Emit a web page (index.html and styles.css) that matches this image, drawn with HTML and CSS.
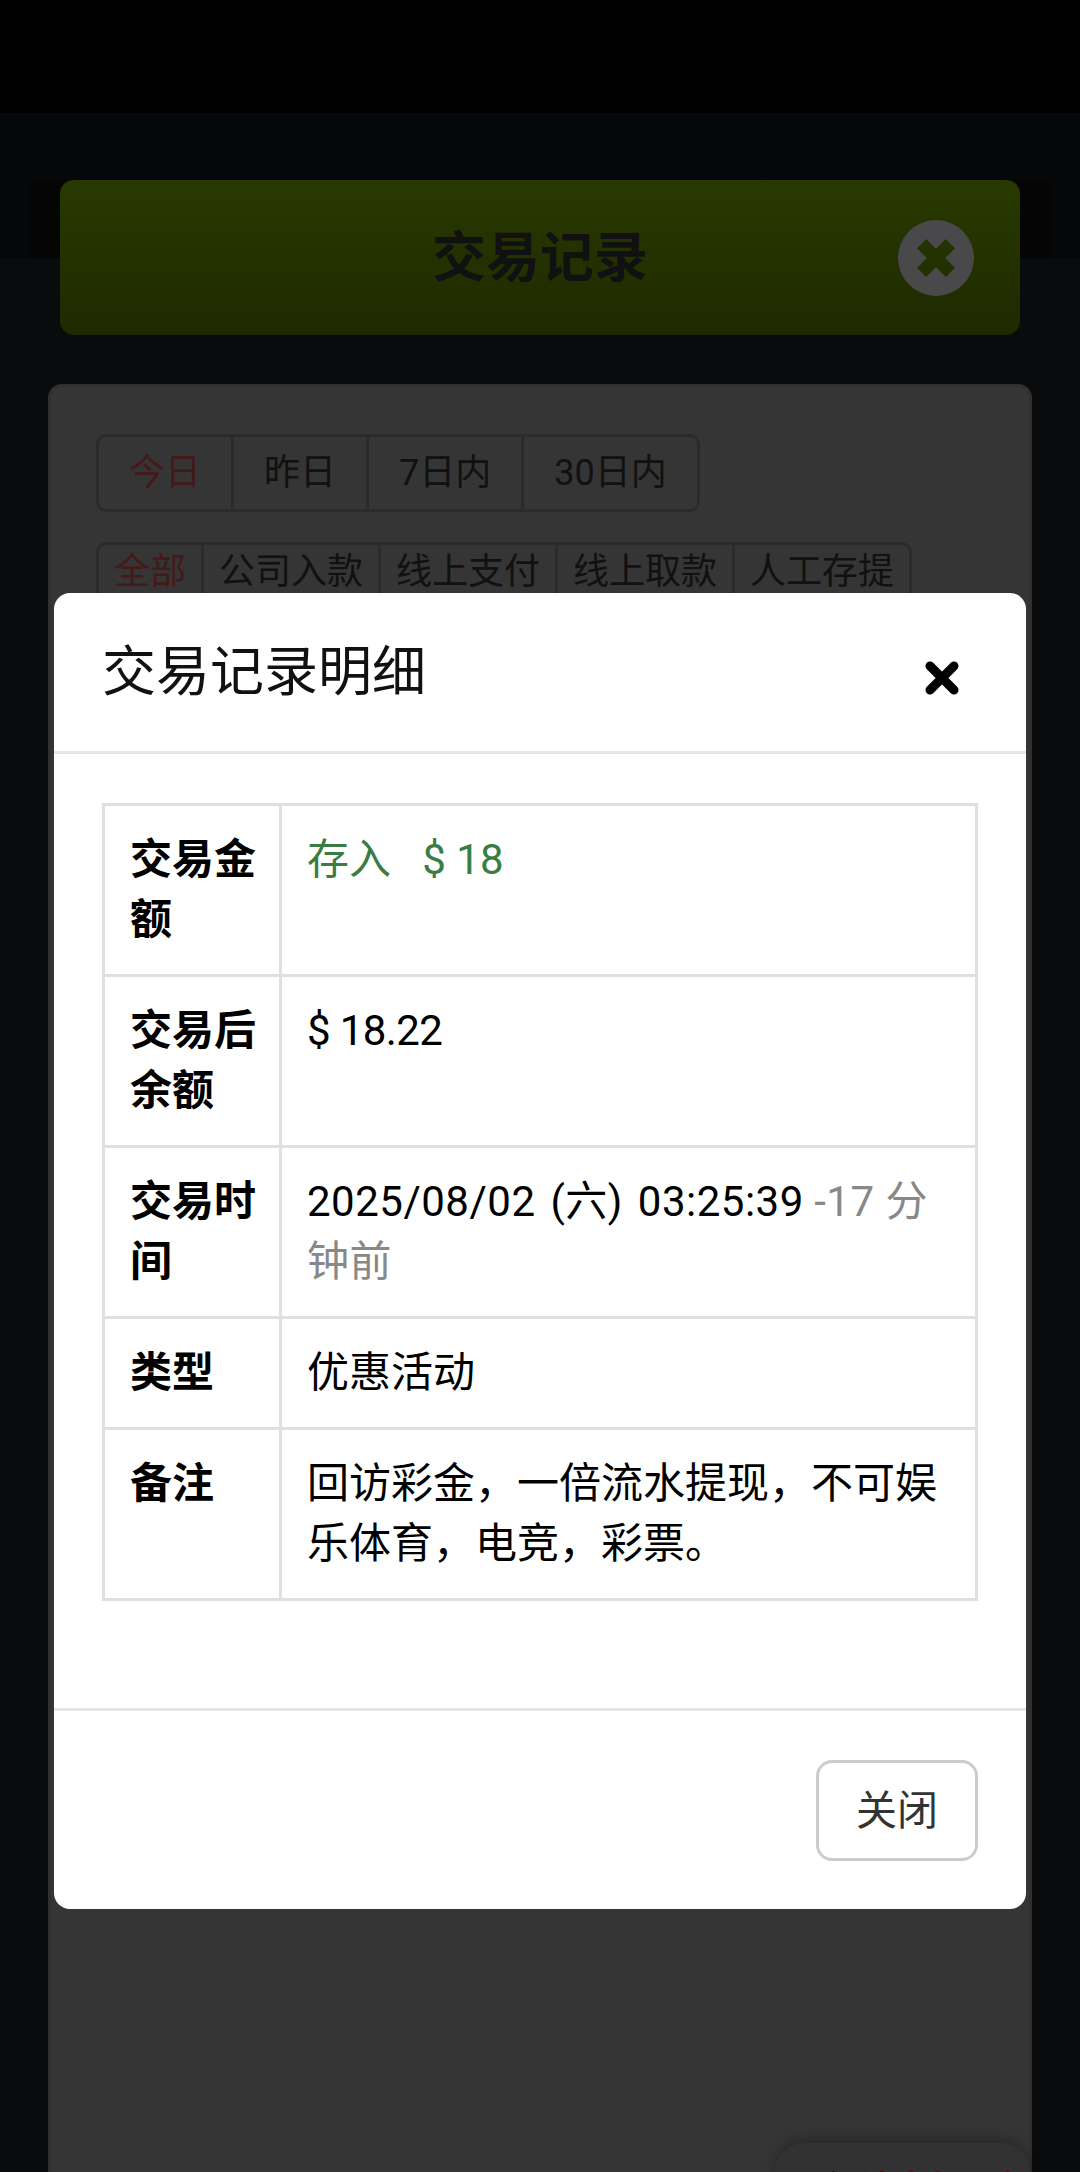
FILE: index.html
```html
<!DOCTYPE html>
<html lang="zh-CN">
<head>
  <meta charset="UTF-8">
  <title>交易记录</title>
  <link rel="stylesheet" href="styles.css">
</head>
<body>
  <div class="statusbar"></div>

  <div class="page">
    <div class="top">
      <div class="topbar">
        <h1>交易记录</h1>
        <svg class="topbar-close" width="76" height="76" viewBox="0 0 76 76">
          <path fill="#f6f6ff" fill-rule="evenodd" d="M38 0a38 38 0 1 0 0 76a38 38 0 1 0 0-76z M38 28.8L47.8 19L57 28.2L47.2 38L57 47.8L47.8 57L38 47.2L28.2 57L19 47.8L28.8 38L19 28.2L28.2 19z"/>
        </svg>
      </div>
    </div>

    <div class="panel">
      <div class="tabs tabs-day">
        <a class="active">今日</a>
        <a>昨日</a>
        <a>7日内</a>
        <a>30日内</a>
      </div>
      <div class="tabs tabs-type">
        <a class="active">全部</a>
        <a>公司入款</a>
        <a>线上支付</a>
        <a>线上取款</a>
        <a>人工存提</a>
      </div>
    </div>

    <div class="float-box"><span>合</span> <em>计金额明细</em></div>
  </div>

  <div class="backdrop">
    <div class="modal">
      <div class="modal-header">
        <h2>交易记录明细</h2>
        <svg class="modal-x" width="44" height="44" viewBox="0 0 44 44">
          <path d="M10 10L34 34M34 10L10 34" stroke="#000" stroke-width="9" stroke-linecap="round" fill="none"/>
        </svg>
      </div>

      <div class="modal-body">
        <table class="detail">
          <tr>
            <th>交易金额</th>
            <td><span class="in">存入 &nbsp; $ 18</span></td>
          </tr>
          <tr>
            <th>交易后余额</th>
            <td><span class="amount">$ 18.22</span></td>
          </tr>
          <tr>
            <th>交易时间</th>
            <td><span class="date">2025/08/02 (六) 03:25:39</span> <span class="ago">-17 分钟前</span></td>
          </tr>
          <tr>
            <th>类型</th>
            <td>优惠活动</td>
          </tr>
          <tr>
            <th>备注</th>
            <td>回访彩金，一倍流水提现，不可娱乐体育，电竞，彩票。</td>
          </tr>
        </table>
      </div>

      <div class="modal-footer">
        <button class="btn-close">关闭</button>
      </div>
    </div>
  </div>
</body>
</html>
```

FILE: styles.css
```css
* {
  box-sizing: border-box;
}

html, body {
  margin: 0;
  height: 2172px;
  overflow: hidden;
}

body {
  position: relative;
  background: #000;
  font-family: Roboto, "Noto Sans CJK SC", sans-serif;
  color: #000;
}

.statusbar {
  height: 113px;
  background: #000;
}

.page {
  position: relative;
  height: 2059px;
  background: linear-gradient(to bottom, #171a1e 145px, #21252b 145px);
}

.top {
  position: relative;
  padding: 67px 60px 0;
}

/* dark strip behind the title bar */
.top::before {
  content: "";
  position: absolute;
  left: 30px;
  right: 30px;
  top: 67px;
  height: 78px;
  background: #111214;
}

.topbar {
  position: relative;
  display: flex;
  align-items: center;
  justify-content: center;
  height: 155px;
  padding-bottom: 8px;
  border-radius: 14px;
  background: linear-gradient(to bottom, #85c100, #6a8a00);
}

.topbar h1 {
  margin: 0;
  font-size: 54px;
  font-weight: 700;
  color: #393939;
}

.topbar-close {
  position: absolute;
  right: 46px;
  top: 40px;
}

.panel {
  height: 1800px;
  margin: 49px 48px 0;
  padding: 47px 45px;
  background: #b1b1b1;
  border: 3px solid #a0a0a0;
  border-radius: 14px;
}

.tabs {
  display: flex;
  width: fit-content;
  border: 3px solid #909090;
  border-radius: 10px;
  color: #393939;
}

.tabs a {
  border-left: 3px solid #909090;
  white-space: nowrap;
}

.tabs a:first-child {
  border-left: 0;
}

.tabs .active {
  color: #e05555;
}

.tabs-day a {
  padding: 0 30px;
  font-size: 36px;
  line-height: 72px;
}

.tabs-type {
  margin-top: 30px;
}

.tabs-type a {
  padding: 0 15px;
  font-size: 36px;
  line-height: 54px;
}

.float-box {
  position: absolute;
  right: 50px;
  top: 2030px;
  width: 255px;
  height: 80px;
  padding: 24px 40px;
  border-radius: 30px;
  background: #a8a8a8;
  box-shadow: 0 -4px 14px rgba(0, 0, 0, .25);
  font-size: 35px;
  line-height: 46px;
  white-space: nowrap;
  overflow: hidden;
  color: #393939;
}

.float-box em {
  font-style: normal;
  font-weight: 700;
  color: #ff3030;
}

.backdrop {
  position: absolute;
  inset: 0;
  padding: 593px 54px 0;
  background: rgba(0, 0, 0, .7);
}

.modal {
  height: 1316px;
  background: #fff;
  border-radius: 16px;
  overflow: hidden;
}

.modal-header {
  position: relative;
  height: 161px;
  padding: 46px 48px 0;
  border-bottom: 3px solid #e6e6e6;
}

.modal-header h2 {
  margin: 0;
  font-size: 54px;
  font-weight: 400;
  line-height: 68px;
  color: #111;
}

.modal-x {
  position: absolute;
  right: 62px;
  top: 63px;
}

.modal-body {
  height: 957px;
  padding: 49px 48px 0;
  border-bottom: 3px solid #e6e6e6;
}

.detail {
  width: 100%;
  table-layout: fixed;
  border-collapse: collapse;
  font-size: 42px;
  line-height: 60px;
}

.detail th,
.detail td {
  padding: 24px 25px;
  border: 3px solid #e0e0e0;
  text-align: left;
  vertical-align: top;
  color: #000;
}

.detail th {
  width: 177px;
  padding-right: 15px;
  font-weight: 700;
}

.detail .in {
  color: #3a7d44;
}

.detail .amount {
  letter-spacing: -.6px;
}

.detail .date {
  letter-spacing: .5px;
  word-spacing: 4px;
}

.detail .ago {
  color: #888;
  letter-spacing: .5px;
}

.modal-footer {
  display: flex;
  justify-content: flex-end;
  padding: 49px 48px;
}

.btn-close {
  width: 162px;
  height: 101px;
  padding: 0 0 7px;
  background: #fff;
  border: 3px solid #ccc;
  border-radius: 16px;
  font-family: inherit;
  font-size: 41px;
  color: #333;
}
```
